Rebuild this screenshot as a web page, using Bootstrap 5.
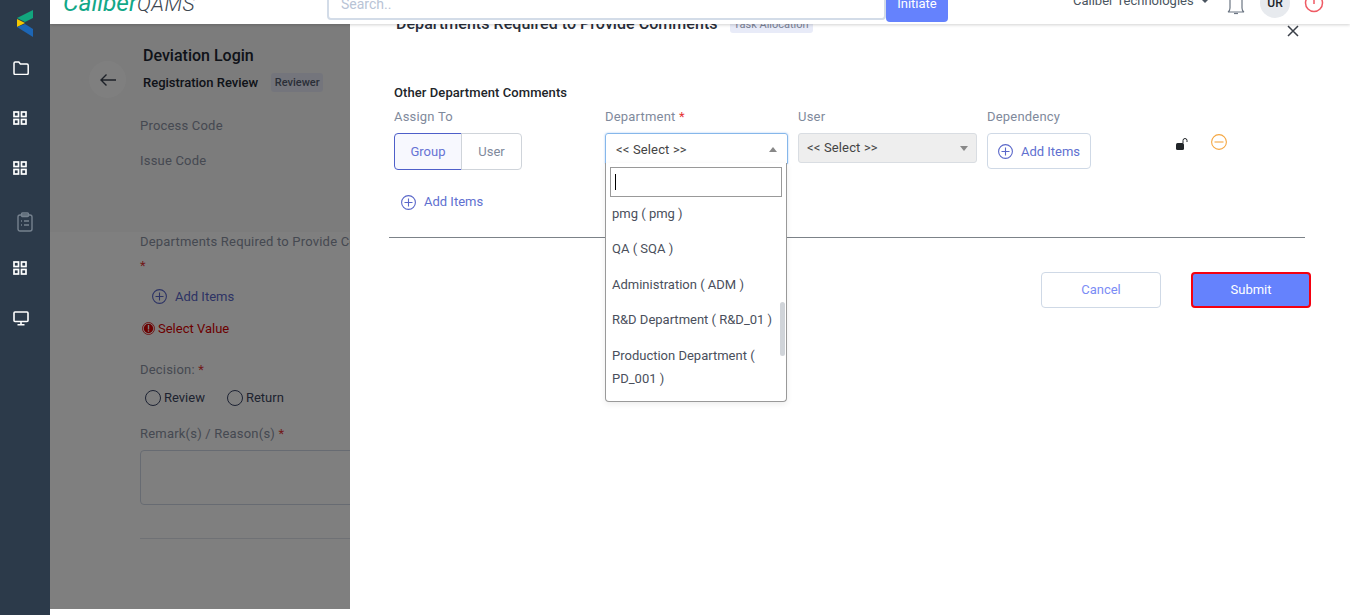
<!DOCTYPE html>
<html lang="en">
<head>
  <meta charset="UTF-8">
  <meta name="viewport" content="width=device-width, initial-scale=1.0">
  <title>Deviation Login - Registration Review</title>
  <link href="https://cdn.jsdelivr.net/npm/bootstrap@5.3.0/dist/css/bootstrap.min.css" rel="stylesheet">
  <style>
    html, body { height: 615px; overflow: hidden; }
    body { font-family: Roboto, "Liberation Sans", sans-serif; font-size: 13px; color: #212529; background: #fff; }

    /* sidebar */
    .side-rail { width: 50px; height: 615px; background: #2c3a4a; flex: none; position: relative; z-index: 30; }
    .rail-logo { height: 43px; padding: 10px 0 0 17px; }
    .rail-item { height: 50px; padding-left: 13px; display: flex; align-items: center; }
    .rail-item.dim { padding-left: 17px; padding-top: 8px; }

    /* header */
    .top-head { height: 24px; background: #fff; box-shadow: 0 1px 3px rgba(0,0,0,.18); position: relative; z-index: 20; overflow: hidden; }
    .brand-name { width: 277px; padding-left: 13px; margin-top: -13px; line-height: 32px; white-space: nowrap; flex: none; }
    .brand-name b { color: #12a888; font-size: 24.5px; font-weight: 400; font-style: italic; }
    .brand-name span { color: #3c4650; font-size: 21px; font-weight: 300; font-style: italic; letter-spacing: .5px; }
    .search-box { width: 559px; height: 33px; margin-top: -13px; border: 2px solid #d3dce8; border-radius: 4px; padding: 5px 12px; color: #b9c4d6; font-size: 14px; flex: none; }
    .head-go { width: 62px; height: 34px; margin-top: -12px; background: #6582fd; color: #fff; border-radius: 4px; text-align: center; font-size: 13px; line-height: 32px; flex: none; }
    .org-name { margin-left: 125px; margin-top: -7px; font-size: 13px; line-height: 16px; color: #4a5560; white-space: nowrap; width: 153px; flex: none; }
    .org-name i { display: inline-block; width: 0; height: 0; margin-left: 5px; margin-bottom: 2px; border-left: 3px solid transparent; border-right: 3px solid transparent; border-top: 3px solid #4a5560; }
    .user-dot { width: 30px; height: 30px; margin-left: 14px; margin-top: -12px; border-radius: 50%; background: #e7eaee; text-align: center; line-height: 30px; font-size: 12px; font-weight: 500; flex: none; }
    .power-mark { margin-left: 13px; }

    /* page behind the drawer */
    .page-area { height: 585px; position: relative; background: #fff; }
    .scrim { position: absolute; left: 0; right: 0; top: 0; height: 585px; background: rgba(0,0,0,.5); z-index: 5; }
    .upper-card { height: 208px; background: #f8f8f8; padding: 14px 0 0 90px; }
    .back-round { width: 37px; height: 37px; margin-left: -51px; margin-top: 23px; border-radius: 50%; background: #fff; flex: none; display: flex; align-items: center; justify-content: center; }
    .page-title { font-size: 16px; font-weight: 500; line-height: 20px; margin: 8px 0 7px 17px; color: #212632; }
    .page-sub { font-size: 13px; font-weight: 500; margin-left: 17px; line-height: 19px; color: #212632; }
    .role-tag { width: 52px; height: 19px; margin-left: 13px; background: #e8ebf8; border-radius: 3px; color: #555d70; font-size: 11px; text-align: center; line-height: 19px; font-weight: 500; }
    .plain-label { color: #8b92a3; font-size: 13px; line-height: 16px; letter-spacing: .2px; }
    .code-first { margin-top: 20px; }
    .code-next { margin-top: 19px; }
    .lower-part { padding: 2px 0 0 90px; width: 300px; white-space: nowrap; }
    .req { color: #e53535; }
    .req-line { margin-top: 9px; line-height: 14px; }
    .add-link { color: #5a67c9; font-size: 13px; margin: 14px 0 0 12px; }
    .bad-note { color: #d90000; margin-top: 13px; line-height: 18px; padding-left: 2px; }
    .bad-note span { margin-left: -1px; }
    .decision-label { margin-top: 24px; }
    .remark-label { margin-top: 19px; }
    .round-pick { width: 16px; height: 16px; border: 1.5px solid #3a4566; border-radius: 50%; display: inline-block; margin-right: 3px; }
    .round-pick.next-pick { margin-left: 22px; }
    .pick-row { margin: 11px 0 0 5px; color: #3d4660; line-height: 18px; }
    .note-box { width: 400px; height: 55px; margin-top: 8px; border: 1px solid #cfd6e4; border-radius: 4px; background: #fff; }
    .soft-rule { width: 400px; height: 1px; background: #dfe3ea; margin-top: 33px; }

    /* drawer */
    .side-drawer { position: absolute; left: 300px; top: 24px; width: 1000px; height: 591px; background: #fff; z-index: 10; padding-left: 44px; }
    .drawer-head { margin-top: -10px; height: 20px; padding-left: 2px; }
    .drawer-title { font-size: 16px; font-weight: 500; line-height: 20px; color: #2a2f3a; letter-spacing: .05px; }
    .task-tag { height: 17px; margin-left: 12px; padding: 0 4px; background: #e8ebf8; border-radius: 3px; color: #7b8296; font-size: 11px; line-height: 17px; margin-top: 2px; }
    .close-x { position: absolute; left: 937px; top: 1px; }
    .other-title { font-size: 13px; font-weight: 500; line-height: 18px; margin-top: 50px; color: #212529; letter-spacing: .08px; }
    .field-wrap { margin-top: 7px; }
    .field-label { color: #7f8a9c; font-size: 13px; line-height: 16px; margin-bottom: 8px; letter-spacing: .2px; }
    .col-assign { width: 211px; }
    .col-dept { width: 193px; position: relative; }
    .col-user { width: 189px; }
    .col-dep { width: 188px; }
    .seg-btn { height: 37px; font-size: 13px; display: flex; align-items: center; justify-content: center; background: #fff; color: #7f8a9c; border: 1px solid #cfd4da; }
    .seg-on { width: 68px; background: #f7f8fe; color: #6673d4; border-color: #4e5fc9; border-radius: 4px 0 0 4px; }
    .seg-off { width: 61px; margin-left: -1px; border-radius: 0 4px 4px 0; }
    .sel-open { width: 183px; height: 31px; border: 1px solid #86b7ea; border-radius: 3px 3px 0 0; box-shadow: 0 0 2px rgba(100,160,240,.6); padding: 2px 10px 0; color: #444; letter-spacing: .15px; }
    .sel-off { width: 179px; height: 30px; background: #eeeeee; border: 1px solid #d9dde2; border-radius: 3px; padding: 0 8px; color: #444; letter-spacing: .15px; }
    .caret-up { width: 0; height: 0; border-left: 4px solid transparent; border-right: 4px solid transparent; border-bottom: 5px solid #888; }
    .caret-dn { width: 0; height: 0; border-left: 4px solid transparent; border-right: 4px solid transparent; border-top: 5px solid #888; }
    .add-box { width: 104px; height: 36px; border: 1px solid #cfd9e6; border-radius: 4px; color: #6070d0; padding-top: 1px; }
    .lock-spot { width: 36px; padding-top: 24px; }
    .minus-spot { padding-top: 22px; }
    .drop-panel { position: absolute; left: 0; top: 54px; width: 182px; height: 239px; background: #fff; border: 1px solid #999; border-top: 0; border-radius: 0 0 4px 4px; box-shadow: 0 2px 6px rgba(0,0,0,.08); z-index: 12; overflow: hidden; }
    .drop-find { width: 172px; height: 30px; margin: 4px 0 0 4px; border: 1px solid #999; padding: 4px 4px; }
    .caret-line { display: block; width: 1px; height: 16px; margin-top: 2px; background: #000; }
    .drop-list { padding: 4.6px 8px 0 6px; position: relative; height: 205px; }
    .drop-opt { line-height: 23px; padding-bottom: 12.5px; color: #4a4f5c; }
    .drop-bar { position: absolute; right: 1px; top: 105px; width: 5px; height: 54px; border-radius: 3px; background: #d0d4d9; }
    .add-again { margin: 23px 0 0 7px; color: #6070d0; height: 18px; }
    .drawer-rule { width: 916px; height: 1px; background: #7c8288; margin: 26px 0 0 -5px; }
    .foot-btns { width: 917px; margin-top: 34px; gap: 30px; }
    .btn-cancel { width: 120px; height: 36px; border: 1px solid #cfd9e6; border-radius: 4px; background: #fff; color: #7b8cf5; font-size: 13px; padding: 0; }
    .btn-submit { width: 120px; height: 36px; border: 2px solid #f5000f; border-radius: 4px; background: #6582fd; color: #fff; font-size: 13px; padding: 0; }
    .btn-cancel:hover { background: #fff; color: #7b8cf5; }
    .btn-submit:hover { background: #6582fd; color: #fff; border-color: #f5000f; }
  </style>
</head>
<body>

<div class="d-flex">
  <!-- left rail -->
  <div class="side-rail">
    <div class="rail-logo">
      <svg width="17" height="27" viewBox="0 0 17 27"><polygon points="16,0 16,8 8,12 0,8" fill="#12a57d"/><polygon points="0,9 8,13 0,17" fill="#f5c800"/><polygon points="0,17 8,14 16,19 16,27" fill="#1d66b5"/></svg>
    </div>
    <div class="rail-item"><svg width="16" height="14" viewBox="0 0 16 14" fill="none" stroke="#fff" stroke-width="1.5"><path d="M1 12.2V2.2q0-1.2 1.2-1.2h3.6l1.6 2h6.600q1.2 0 1.2 1.2v8q0 1.2-1.2 1.2H2.2Q1 13.4 1 12.2z"/></svg></div>
    <div class="rail-item"><svg width="14" height="14" viewBox="0 0 14 14" fill="none" stroke="#fff" stroke-width="1.7"><rect x="1" y="1" width="4.500" height="4.500"/><rect x="8.500" y="1" width="4.500" height="4.500"/><rect x="1" y="8.500" width="4.500" height="4.500"/><rect x="8.500" y="8.500" width="4.500" height="4.500"/></svg></div>
    <div class="rail-item"><svg width="14" height="14" viewBox="0 0 14 14" fill="none" stroke="#fff" stroke-width="1.7"><rect x="1" y="1" width="4.500" height="4.500"/><rect x="8.500" y="1" width="4.500" height="4.500"/><rect x="1" y="8.500" width="4.500" height="4.500"/><rect x="8.500" y="8.500" width="4.500" height="4.500"/></svg></div>
    <div class="rail-item dim"><svg width="16" height="20" viewBox="0 0 16 20" fill="none" stroke="#76828f" stroke-width="1.4"><rect x="1" y="3" width="14" height="16" rx="2"/><rect x="4.500" y="1" width="7" height="3.500" rx="1"/><path d="M4 9h1M7 9h5M4 13h1M7 13h5"/></svg></div>
    <div class="rail-item"><svg width="14" height="14" viewBox="0 0 14 14" fill="none" stroke="#fff" stroke-width="1.7"><rect x="1" y="1" width="4.500" height="4.500"/><rect x="8.500" y="1" width="4.500" height="4.500"/><rect x="1" y="8.500" width="4.500" height="4.500"/><rect x="8.500" y="8.500" width="4.500" height="4.500"/></svg></div>
    <div class="rail-item"><svg width="16" height="15" viewBox="0 0 16 15" fill="none" stroke="#fff" stroke-width="1.6"><rect x="1" y="1" width="14" height="9.500" rx="1"/><path d="M8 11v2M4.500 13.800h7"/></svg></div>
  </div>

  <div class="flex-grow-1 position-relative">
    <!-- top header, its upper part scrolled out of view -->
    <div class="top-head d-flex">
      <div class="brand-name"><b>Caliber</b><span>QAMS</span></div>
      <div class="search-box">Search..</div>
      <div class="head-go">Initiate</div>
      <div class="org-name">Caliber Technologies <i></i></div>
      <svg width="20" height="24" viewBox="0 0 20 24" fill="none" stroke="#6c7683" stroke-width="1.2"><path d="M4 -2v10q0 3-2 4h16q-2-1-2-4V-2"/><path d="M8 13.500h4"/></svg>
      <div class="user-dot">UR</div>
      <svg class="power-mark" width="22" height="24" viewBox="0 0 22 24" fill="none" stroke="#ef5a64" stroke-width="1.500"><circle cx="11" cy="3" r="8.500"/><path d="M11 -4v8"/></svg>
    </div>

    <!-- page behind the drawer -->
    <div class="page-area">
      <div class="upper-card">
        <div class="d-flex">
          <div class="back-round">
            <svg width="18" height="14" viewBox="0 0 18 14" fill="none" stroke="#3b4350" stroke-width="1.400"><path d="M17 7H2M7.500 1.500 2 7l5.500 5.500"/></svg>
          </div>
          <div>
            <div class="page-title">Deviation Login</div>
            <div class="d-flex align-items-center">
              <div class="page-sub">Registration Review</div>
              <div class="role-tag">Reviewer</div>
            </div>
          </div>
        </div>
        <div class="plain-label code-first">Process Code</div>
        <div class="plain-label code-next">Issue Code</div>
      </div>
      <div class="lower-part">
        <div class="plain-label">Departments Required to Provide Comments</div>
        <div class="req req-line">*</div>
        <div class="add-link d-flex align-items-center gap-2">
          <svg width="15" height="15" viewBox="0 0 15 15" fill="none" stroke="#5a67c9" stroke-width="1.100"><circle cx="7.500" cy="7.500" r="6.900"/><path d="M7.500 3.500v8M3.500 7.500h8"/></svg>
          Add Items
        </div>
        <div class="bad-note d-flex align-items-center gap-1">
          <svg width="13" height="13" viewBox="0 0 13 13"><circle cx="6.500" cy="6.500" r="6" fill="#fff" stroke="#d90000" stroke-width=".8"/><circle cx="6.500" cy="6.500" r="4.700" fill="#d90000"/><rect x="5.800" y="3" width="1.400" height="4.500" fill="#fff"/><rect x="5.800" y="8.300" width="1.400" height="1.400" fill="#fff"/></svg>
          <span>Select Value</span>
        </div>
        <div class="plain-label decision-label">Decision: <span class="req">*</span></div>
        <div class="pick-row d-flex align-items-center">
          <span class="round-pick"></span><span>Review</span>
          <span class="round-pick next-pick"></span><span>Return</span>
        </div>
        <div class="plain-label remark-label">Remark(s) / Reason(s) <span class="req">*</span></div>
        <div class="note-box"></div>
        <div class="soft-rule"></div>
      </div>
      <div class="scrim"></div>
    </div>

    <!-- drawer with the comment assignment form -->
    <div class="side-drawer">
      <div class="drawer-head d-flex">
        <div class="drawer-title">Departments Required to Provide Comments</div>
        <div class="task-tag">Task Allocation</div>
      </div>
      <svg class="close-x" width="12" height="12" viewBox="0 0 12 12" fill="none" stroke="#3a3f48" stroke-width="1.500"><path d="M1 1l10 10M11 1 1 11"/></svg>

      <div class="other-title">Other Department Comments</div>
      <div class="field-wrap d-flex">
        <div class="col-assign">
          <div class="field-label">Assign To</div>
          <div class="d-flex">
            <div class="seg-btn seg-on">Group</div>
            <div class="seg-btn seg-off">User</div>
          </div>
        </div>
        <div class="col-dept">
          <div class="field-label">Department <span class="req">*</span></div>
          <div class="sel-open d-flex justify-content-between align-items-center"><span>&lt;&lt; Select &gt;&gt;</span><span class="caret-up"></span></div>
          <div class="drop-panel">
            <div class="drop-find"><span class="caret-line"></span></div>
            <div class="drop-list">
              <div class="drop-opt">pmg ( pmg )</div>
              <div class="drop-opt">QA ( SQA )</div>
              <div class="drop-opt">Administration ( ADM )</div>
              <div class="drop-opt">R&amp;D Department ( R&amp;D_01 )</div>
              <div class="drop-opt">Production Department ( PD_001 )</div>
              <div class="drop-bar"></div>
            </div>
          </div>
        </div>
        <div class="col-user">
          <div class="field-label">User</div>
          <div class="sel-off d-flex justify-content-between align-items-center"><span>&lt;&lt; Select &gt;&gt;</span><span class="caret-dn"></span></div>
        </div>
        <div class="col-dep">
          <div class="field-label">Dependency</div>
          <div class="add-box d-flex align-items-center justify-content-center gap-2">
            <svg width="15" height="15" viewBox="0 0 15 15" fill="none" stroke="#5a67c9" stroke-width="1.100"><circle cx="7.500" cy="7.500" r="6.900"/><path d="M7.500 3.500v8M3.500 7.500h8"/></svg>
            Add Items
          </div>
        </div>
        <div class="lock-spot">
          <svg width="14" height="14" viewBox="0 0 14 14"><rect x="1" y="6" width="8" height="7" rx="1.500" fill="#212529"/><path d="M8 6V3.500a2 2 0 0 1 4 0V5" fill="none" stroke="#212529" stroke-width="1"/></svg>
        </div>
        <div class="minus-spot">
          <svg width="16" height="16" viewBox="0 0 16 16" fill="none" stroke="#f5a742" stroke-width="1.100"><circle cx="8" cy="8" r="7.400"/><path d="M3.500 8h9"/></svg>
        </div>
      </div>

      <div class="add-again d-flex align-items-center gap-2">
        <svg width="15" height="15" viewBox="0 0 15 15" fill="none" stroke="#5a67c9" stroke-width="1.100"><circle cx="7.500" cy="7.500" r="6.900"/><path d="M7.500 3.500v8M3.500 7.500h8"/></svg>
        Add Items
      </div>
      <div class="drawer-rule"></div>
      <div class="foot-btns d-flex justify-content-end">
        <button type="button" class="btn btn-cancel">Cancel</button>
        <button type="button" class="btn btn-submit">Submit</button>
      </div>
    </div>
  </div>
</div>

<script src="https://cdn.jsdelivr.net/npm/bootstrap@5.3.0/dist/js/bootstrap.bundle.min.js"></script>
</body>
</html>
